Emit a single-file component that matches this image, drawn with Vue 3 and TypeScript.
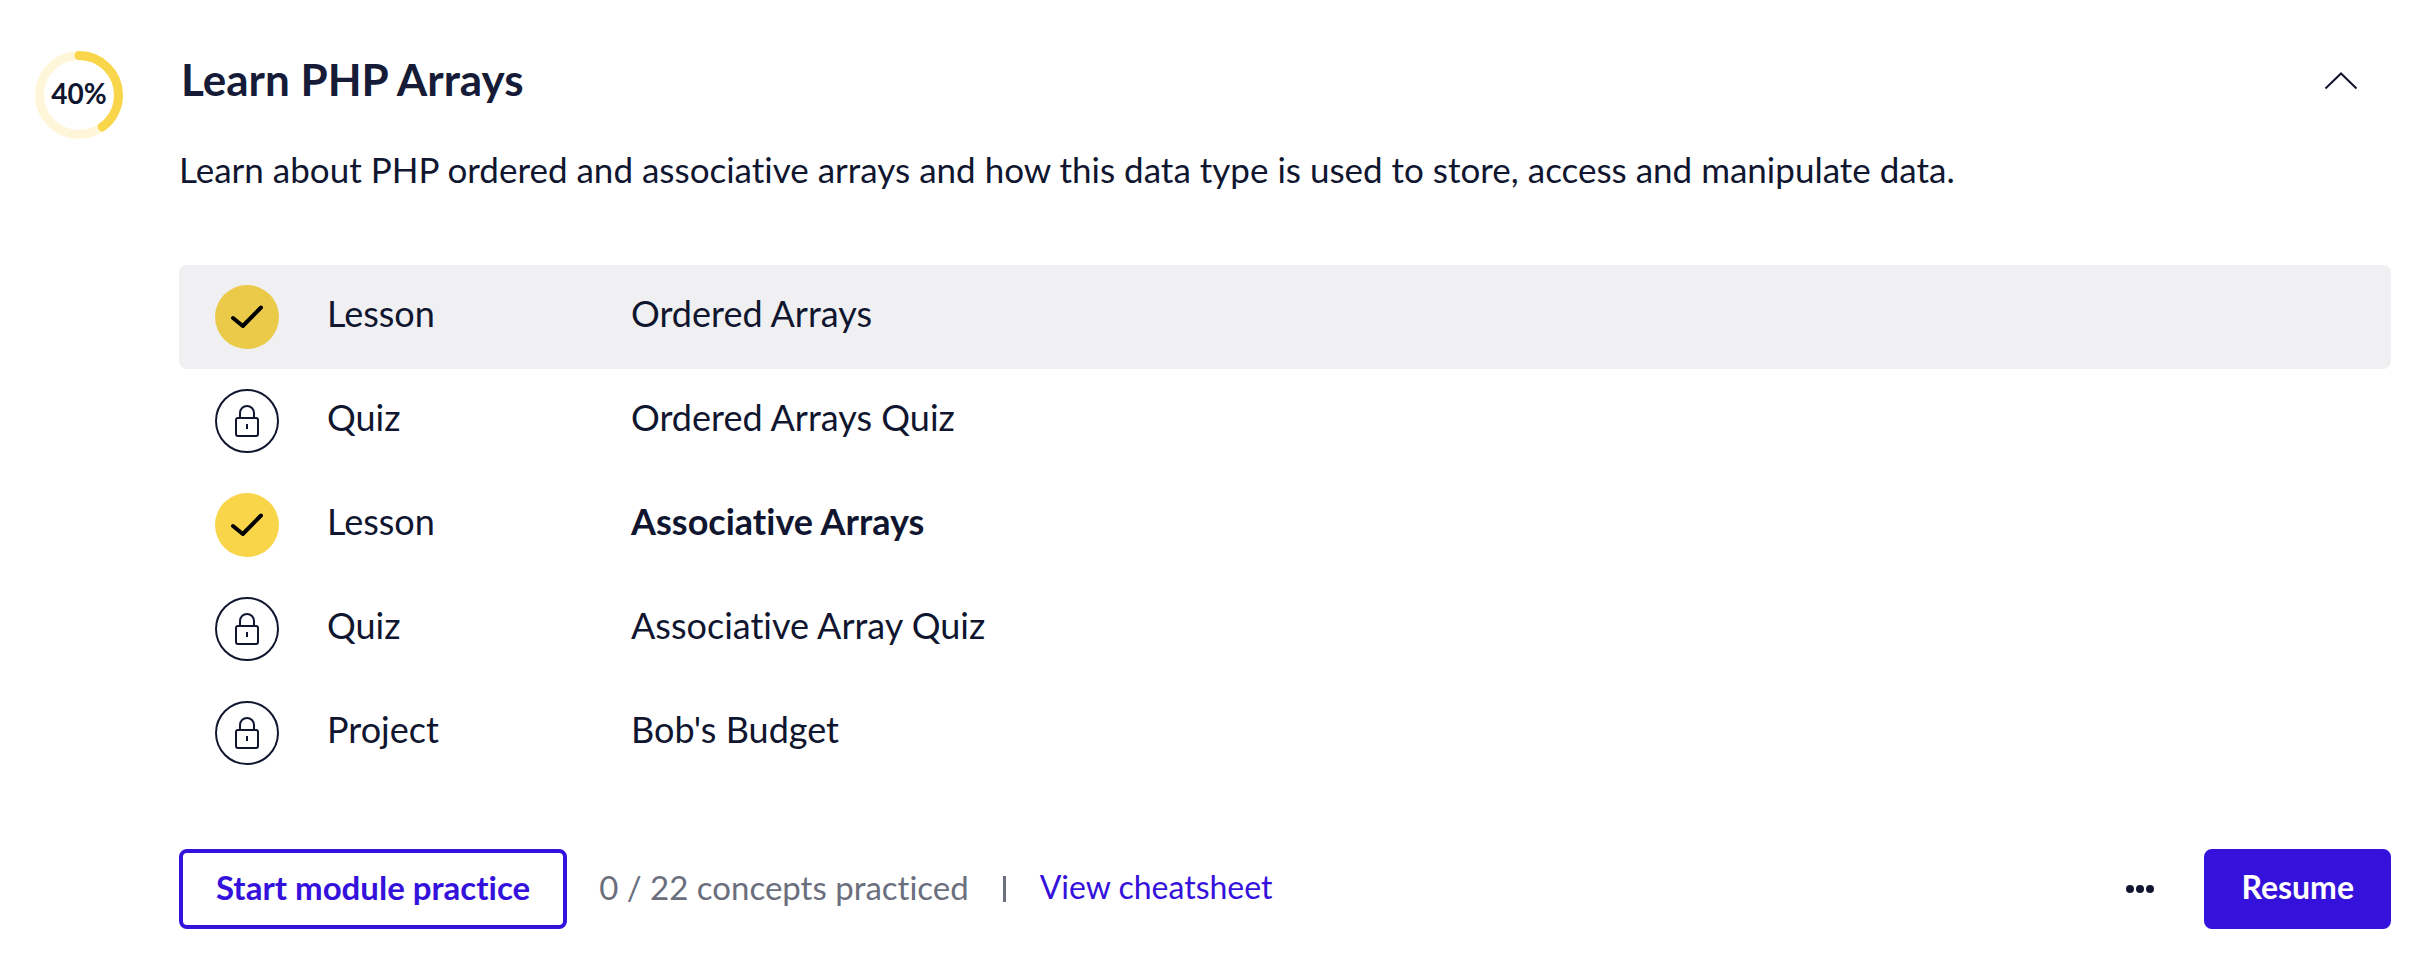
<script setup lang="ts">
import { computed, ref } from 'vue'

interface Item {
  kind: string
  title: string
  done: boolean
  active?: boolean
  current?: boolean
}

const items: Item[] = [
  { kind: 'Lesson', title: 'Ordered Arrays', done: true, active: true },
  { kind: 'Quiz', title: 'Ordered Arrays Quiz', done: false },
  { kind: 'Lesson', title: 'Associative Arrays', done: true, current: true },
  { kind: 'Quiz', title: 'Associative Array Quiz', done: false },
  { kind: 'Project', title: "Bob's Budget", done: false },
]

const percent = ref(40)
const open = ref(true)
const dash = computed(() => `${percent.value} 100`)
</script>

<template>
  <main class="module">
    <div class="progress">
      <svg viewBox="0 0 88 88" aria-hidden="true">
        <circle class="track" cx="44" cy="44" r="39.5" />
        <circle
          class="bar"
          cx="44"
          cy="44"
          r="39.5"
          pathLength="100"
          :stroke-dasharray="dash"
          transform="rotate(-90 44 44)"
        />
      </svg>
      <span class="percent">{{ percent }}%</span>
    </div>

    <section class="content">
      <header class="head">
        <h2>Learn PHP Arrays</h2>
        <button class="toggle" type="button" aria-label="Toggle module" :aria-expanded="open" @click="open = !open">
          <svg viewBox="0 0 36 20" aria-hidden="true"><path d="M2.5 17.5 18 2.5 33.5 17.5" /></svg>
        </button>
      </header>
      <p class="description">
        Learn about PHP ordered and associative arrays and how this data type is used to store, access and manipulate data.
      </p>

      <ul v-show="open" class="items">
        <li v-for="item in items" :key="item.title">
          <a href="#" class="row" :class="{ active: item.active, current: item.current }">
            <svg v-if="item.done" class="status done" viewBox="0 0 64 64" aria-hidden="true">
              <circle cx="32" cy="32" r="32" />
              <path d="M18 33 27.8 41 46 22.5" />
            </svg>
            <svg v-else class="status locked" viewBox="0 0 64 64" aria-hidden="true">
              <circle cx="32" cy="32" r="31" />
              <rect x="21" y="29" width="22" height="18" rx="2" />
              <path d="M25 29v-5a7 7 0 0 1 14 0v5M32 35v5" />
            </svg>
            <span class="kind">{{ item.kind }}</span>
            <span class="title">{{ item.title }}</span>
          </a>
        </li>
      </ul>

      <footer class="actions">
        <button class="btn outline" type="button">Start module practice</button>
        <span class="count">0 / 22 concepts practiced</span>
        <span class="divider" aria-hidden="true"></span>
        <a class="cheatsheet" href="#">View cheatsheet</a>
        <button class="more" type="button" aria-label="More options">
          <svg viewBox="0 0 28 8" aria-hidden="true">
            <circle cx="4" cy="4" r="4" /><circle cx="14" cy="4" r="4" /><circle cx="24" cy="4" r="4" />
          </svg>
        </button>
        <button class="btn solid" type="button">Resume</button>
      </footer>
    </section>
  </main>
</template>

<style>
body {
  margin: 0;
  background: #fff;
}
</style>

<style scoped>
.module {
  display: flex;
  gap: 56px;
  padding: 51px 37px 43px 35px;
  color: #10162f;
  font-family: Lato, "Liberation Sans", sans-serif;
  font-size: 36px;
  line-height: 48px;
  font-variant-ligatures: none;
}
button {
  font: inherit;
  font-variant-ligatures: none;
  cursor: pointer;
}
.progress {
  display: grid;
  place-items: center;
  flex: none;
  width: 88px;
  height: 88px;
}
.progress svg,
.percent {
  grid-area: 1 / 1;
}
.progress circle {
  fill: none;
  stroke-width: 9;
}
.progress .track {
  stroke: #fff6d9;
}
.progress .bar {
  stroke: #f9d549;
  stroke-linecap: round;
}
.percent {
  font-size: 28px;
  line-height: 32px;
  font-weight: 700;
  padding-bottom: 4px;
}
.content {
  flex: 1;
  min-width: 0;
}
.head {
  display: flex;
  align-items: center;
  justify-content: space-between;
  padding-right: 32px;
}
h2 {
  margin: 0;
  padding: 0 0 4px 2px;
  font-size: 44px;
  line-height: 56px;
  font-weight: 700;
  color: #161b38;
}
.toggle,
.more {
  display: flex;
  padding: 0;
  border: 0;
  background: none;
}
.toggle svg {
  width: 36px;
  height: 20px;
  fill: none;
  stroke: #10162f;
  stroke-width: 2;
}
.description {
  margin: 34px 0 72px;
  font-size: 35px;
}
.items {
  list-style: none;
  margin: 0;
  padding: 0;
}
.row {
  display: grid;
  grid-template-columns: 64px 256px 1fr;
  column-gap: 48px;
  align-items: center;
  padding: 20px 36px;
  border-radius: 8px;
  color: inherit;
  text-decoration: none;
}
.row.active {
  background: #f0f0f2;
}
.kind,
.title {
  padding-bottom: 8px;
}
.current .title {
  font-weight: 700;
}
.status {
  width: 64px;
  height: 64px;
}
.done circle {
  fill: #f9d549;
}
.active .done circle {
  fill: #eaca48;
}
.done path {
  fill: none;
  stroke: #000;
  stroke-width: 4;
  stroke-linecap: round;
  stroke-linejoin: round;
}
.locked {
  fill: none;
  stroke: #10162f;
  stroke-width: 2;
}
.actions {
  display: flex;
  align-items: center;
  margin-top: 64px;
  font-size: 32px;
  line-height: 40px;
}
.btn {
  height: 80px;
  padding: 0 33px 4px;
  border: 4px solid #3412dc;
  border-radius: 8px;
  font-weight: 700;
  white-space: nowrap;
}
.outline {
  background: #fff;
  color: #3412dc;
  font-size: 33px;
}
.solid {
  background: #3412dc;
  color: #fff;
}
.count {
  margin-left: 32px;
  padding-bottom: 4px;
  color: #6a6e7d;
  font-size: 33px;
}
.divider {
  width: 3px;
  height: 26px;
  margin: 0 34px;
  background: #6a6e7d;
}
.cheatsheet {
  padding-bottom: 4px;
  color: #3412dc;
  text-decoration: none;
}
.more {
  margin: 0 50px 0 auto;
}
.more svg {
  width: 28px;
  height: 8px;
  fill: #10162f;
}
</style>
